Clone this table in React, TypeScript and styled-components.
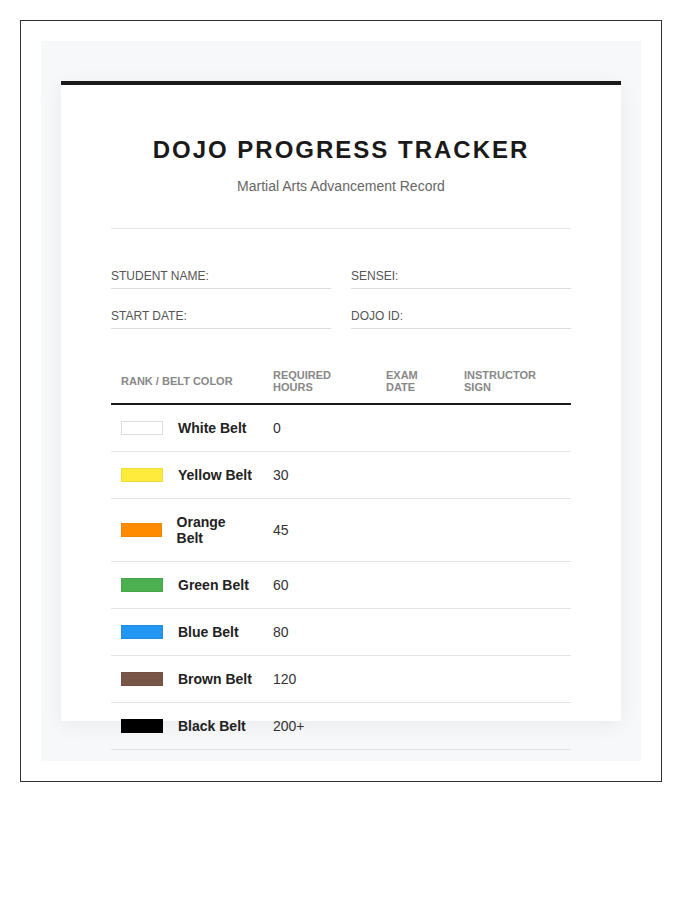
import styled, { createGlobalStyle } from 'styled-components';

const GlobalStyle = createGlobalStyle`
  body {
    margin: 0;
    background: #ffffff;
    font-family: "Liberation Sans", Arial, sans-serif;
  }
`;

const Page = styled.div`
  padding: 20px;
`;

const Frame = styled.div`
  width: 642px;
  padding: 20px;
  border: 1px solid #333333;
  box-sizing: border-box;
`;

const Backdrop = styled.div`
  background: #f7f8fa;
  padding: 40px 20px;
`;

const Sheet = styled.div`
  height: 640px;
  box-sizing: border-box;
  background: #ffffff;
  border-top: 4px solid #1a1a1a;
  box-shadow: 0 4px 20px rgba(0, 0, 0, 0.06);
  padding: 51px 50px 0;
`;

const Header = styled.div`
  text-align: center;
  padding-bottom: 34px;
  border-bottom: 1px solid #e4e4e4;
`;

const Title = styled.h1`
  margin: 0 0 14px;
  font-size: 24px;
  font-weight: 700;
  letter-spacing: 2px;
  color: #1a1a1a;
  line-height: normal;
`;

const Subtitle = styled.div`
  font-size: 14px;
  color: #666666;
`;

const Fields = styled.div`
  display: grid;
  grid-template-columns: 1fr 1fr;
  column-gap: 20px;
  row-gap: 20px;
  margin-top: 40px;
`;

const Field = styled.div`
  font-size: 12px;
  color: #555555;
  padding-bottom: 5px;
  border-bottom: 1px solid #dddddd;
`;

const Table = styled.table`
  width: 460px;
  margin-top: 30px;
  border-collapse: collapse;
  table-layout: fixed;
`;

const HeadCell = styled.th`
  padding: 10px;
  text-align: left;
  vertical-align: middle;
  font-size: 11px;
  font-weight: 700;
  color: #888888;
  border-bottom: 2px solid #1a1a1a;
`;

const Row = styled.tr`
  border-bottom: 1px solid #e4e4e4;
`;

const Cell = styled.td`
  padding: 15px 10px;
  font-size: 14px;
  color: #333333;
  vertical-align: middle;
`;

const Rank = styled.div`
  display: flex;
  align-items: center;
  gap: 15px;
`;

const Swatch = styled.span<{ $color: string }>`
  display: block;
  width: 40px;
  height: 12px;
  background: ${(p) => p.$color};
  border: 1px solid ${(p) => (p.$color === '#ffffff' ? '#dddddd' : 'rgba(0, 0, 0, 0.06)')};
`;

const BeltName = styled.span`
  font-weight: 700;
  color: #222222;
`;

const belts = [
  { name: 'White Belt', color: '#ffffff', hours: '0' },
  { name: 'Yellow Belt', color: '#ffeb3b', hours: '30' },
  { name: 'Orange Belt', color: '#ff8c00', hours: '45' },
  { name: 'Green Belt', color: '#4caf50', hours: '60' },
  { name: 'Blue Belt', color: '#2196f3', hours: '80' },
  { name: 'Brown Belt', color: '#795548', hours: '120' },
  { name: 'Black Belt', color: '#000000', hours: '200+' },
];

const App = () => (
  <>
    <GlobalStyle />
    <Page>
      <Frame>
        <Backdrop>
          <Sheet>
            <Header>
              <Title>DOJO PROGRESS TRACKER</Title>
              <Subtitle>Martial Arts Advancement Record</Subtitle>
            </Header>

            <Fields>
              <Field>STUDENT NAME:</Field>
              <Field>SENSEI:</Field>
              <Field>START DATE:</Field>
              <Field>DOJO ID:</Field>
            </Fields>

            <Table>
              <colgroup>
                <col style={{ width: 152 }} />
                <col style={{ width: 113 }} />
                <col style={{ width: 78 }} />
                <col style={{ width: 117 }} />
              </colgroup>
              <thead>
                <tr>
                  <HeadCell>RANK / BELT COLOR</HeadCell>
                  <HeadCell>REQUIRED HOURS</HeadCell>
                  <HeadCell>EXAM DATE</HeadCell>
                  <HeadCell>INSTRUCTOR SIGN</HeadCell>
                </tr>
              </thead>
              <tbody>
                {belts.map((belt) => (
                  <Row key={belt.name}>
                    <Cell>
                      <Rank>
                        <Swatch $color={belt.color} />
                        <BeltName>{belt.name}</BeltName>
                      </Rank>
                    </Cell>
                    <Cell>{belt.hours}</Cell>
                    <Cell />
                    <Cell />
                  </Row>
                ))}
              </tbody>
            </Table>
          </Sheet>
        </Backdrop>
      </Frame>
    </Page>
  </>
);

export default App;
